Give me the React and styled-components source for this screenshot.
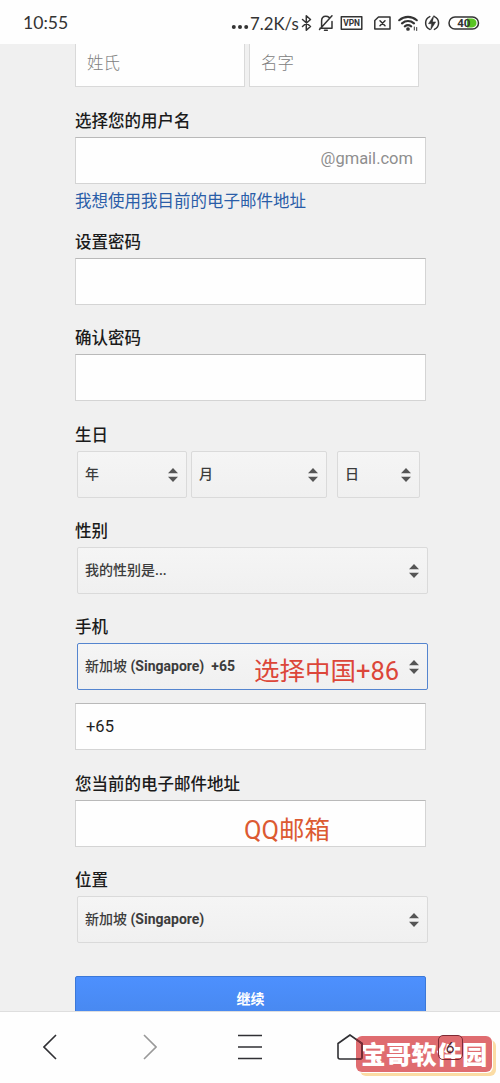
import styled, { createGlobalStyle } from "styled-components";

const GlobalStyle = createGlobalStyle`
  * {
    box-sizing: border-box;
  }
  body {
    margin: 0;
    overflow: hidden;
    font-family: Roboto, "Noto Sans CJK SC", sans-serif;
  }
`;

const Style = {
  Wrapper: styled.div`
    position: relative;
    width: 500px;
    height: 1083px;
    display: flex;
    flex-direction: column;
    overflow: hidden;
    background: #fefefe;
  `,
  StatusBar: styled.header`
    height: 44px;
    flex-shrink: 0;
    display: flex;
    justify-content: space-between;
    padding: 1px 19px 0 23px;
    align-items: center;
    color: #333;
    font-family: Lato, sans-serif;
  `,
  Time: styled.span`
    padding-top: 1px;
    font-size: 17.6px;
    line-height: 24px;
  `,
  StatusIcons: styled.div`
    display: flex;
    align-items: center;
    svg {
      display: block;
      fill: none;
      stroke: #333;
      stroke-width: 1.5;
      stroke-linecap: round;
      stroke-linejoin: round;
    }
  `,
  Speed: styled.span`
    width: 51px;
    padding-left: 1px;
    padding-top: 2px;
    font-size: 16.8px;
    line-height: 24px;
    white-space: nowrap;
  `,
  Form: styled.main`
    height: 967px;
    flex-shrink: 0;
    padding-left: 75px;
    background: #f0f0f0;
    overflow: hidden;
  `,
  NameRow: styled.div`
    display: flex;
    gap: 4px;
    height: 43px;
  `,
  NameInput: styled.div`
    width: 170px;
    padding: 8px 11px;
    font-size: 16.5px;
    line-height: 24px;
    font-weight: 300;
    color: #808080;
    background: #fefefe;
    border: 1px solid #d9d9d9;
    border-top: 0;
  `,
  Group: styled.section`
    padding-top: ${(props) => props.$gap || 20}px;
  `,
  Label: styled.div`
    height: 24px;
    margin-bottom: 5px;
    padding-top: 1px;
    font-size: 16.5px;
    line-height: 25px;
    font-weight: 500;
    color: #1b1b1b;
    white-space: nowrap;
  `,
  Input: styled.div`
    position: relative;
    width: 351px;
    height: 47px;
    margin-top: ${(props) => props.$top || 0}px;
    padding: 0 12px 0 10px;
    display: flex;
    align-items: center;
    justify-content: ${(props) => (props.$right ? "flex-end" : "flex-start")};
    font-size: 16.5px;
    color: ${(props) => (props.$right ? "#8e8e8e" : "#222")};
    background: #fefefe;
    border: 1px solid #d4d4d4;
    border-top-color: #b9b9b9;
  `,
  Suffix: styled.span`
    padding-bottom: 4px;
  `,
  Link: styled.a`
    display: block;
    height: 24px;
    margin-top: 5px;
    margin-bottom: -4px;
    font-size: 16.5px;
    line-height: 25px;
    color: #2a5da8;
  `,
  SelectRow: styled.div`
    display: flex;
  `,
  Select: styled.div`
    position: relative;
    width: ${(props) => props.$width || 351}px;
    height: 47px;
    margin-left: ${(props) => props.$left || 2}px;
    padding: 0 8px 4px 7px;
    display: flex;
    align-items: center;
    justify-content: space-between;
    font-size: 14px;
    font-weight: 500;
    color: #3c3c3c;
    white-space: pre;
    background: linear-gradient(#f5f5f5, #f0f0f0);
    border: 1px solid ${(props) => (props.$focus ? "#5585cf" : "#dadada")};
    border-radius: 2px;
  `,
  Latin: styled.span`
    font-weight: 700;
  `,
  Arrows: styled.svg`
    display: block;
    width: 10px;
    height: 16px;
    margin-top: 4px;
    fill: #555;
  `,
  Note: styled.span`
    position: absolute;
    left: ${(props) => props.$left}px;
    top: ${(props) => props.$top}px;
    font-size: 25.5px;
    line-height: 36px;
    font-weight: 400;
    color: ${(props) => props.color};
    white-space: nowrap;
  `,
  Submit: styled.div`
    width: 351px;
    height: 47px;
    margin-top: 33px;
    font-size: 14px;
    line-height: 44px;
    font-weight: 700;
    text-align: center;
    color: #fff;
    background: linear-gradient(#4d90fe, #4787ed);
    border: 1px solid #3b78d8;
    border-radius: 2px;
  `,
  NavBar: styled.nav`
    height: 72px;
    flex-shrink: 0;
    display: grid;
    grid-template-columns: repeat(5, 100px);
    place-items: center;
    padding-bottom: 1px;
    border-top: 1px solid #dedede;
    svg {
      position: relative;
      z-index: 1;
      display: block;
      fill: none;
      stroke: #303034;
      stroke-width: 1.6;
    }
  `,
  TabCount: styled.div`
    position: relative;
    z-index: 1;
    width: 25px;
    height: 25px;
    border: 1.6px solid #7e2a34;
    border-radius: 5px;
    font: 15px/23px Lato, sans-serif;
    text-align: center;
    color: #4b2229;
  `,
  Watermark: styled.div`
    position: absolute;
    left: 356px;
    top: 1036px;
    width: 136px;
    height: 36px;
    font-family: "Noto Sans CJK SC", sans-serif;
    font-size: 25.3px;
    line-height: 35px;
    font-weight: 900;
    text-align: center;
    white-space: nowrap;
    color: #fff;
    background: #df6c70;
    border-radius: 6px;
    box-shadow: 1px 1px 0 #fff, 4px 4px 0 #fbdca4;
  `,
};

const Arrows = () => (
  <Style.Arrows viewBox="0 0 10 16">
    <path d="M0 6.2 5 1l5 5.2zM0 9.8h10L5 15z" />
  </Style.Arrows>
);

const StatusIcons = () => (
  <Style.StatusIcons>
    <svg width="18" height="20">
      <g fill="#333" stroke="none">
        <circle cx="2.8" cy="14" r="2" />
        <circle cx="9" cy="14" r="2" />
        <circle cx="15.2" cy="14" r="2" />
      </g>
    </svg>
    <Style.Speed>7.2K/s</Style.Speed>
    <svg width="18" height="20">
      <path d="m2.5 6.5 8 7-4.2 3.8V2.8l4.2 3.7-8 7" />
    </svg>
    <svg width="22" height="20">
      <path d="M2 15.2h12M14 15V8.5M3.6 14V8c0-3 1.8-4.8 4.2-4.8 1.4 0 2.4.4 3.2 1.2M1.5 16.5 14 2.8M6.5 17.3h2.8" />
    </svg>
    <svg width="34" height="20">
      <rect x="1.3" y="3.8" width="20.5" height="12.5" />
      <text
        x="11.6"
        y="13"
        textAnchor="middle"
        fontFamily="Roboto"
        fontSize="8.4"
        fontWeight="700"
        fill="#333"
        stroke="none"
      >
        VPN
      </text>
    </svg>
    <svg width="24" height="20">
      <path d="M4.5 4h11.5v12H0.8V7.5zM6 7.7l5 5M11 7.7l-5 5" />
    </svg>
    <svg width="26" height="20">
      <path
        d="M1.2 7.2c5.3-4.5 12.3-4.5 17.6 0M4 10.4c3.6-3 8.4-3 12 0M6.8 13.4c2-1.5 4.4-1.5 6.4 0"
        strokeWidth="2.1"
      />
      <circle cx="10" cy="16" r="1.1" fill="#333" />
      <path d="M16.3 14v3M18.7 14.5v3" strokeWidth="1" />
    </svg>
    <svg width="24" height="20">
      <path d="M5.8 3.6a7 7 0 0 0 0 12.8M10.4 3.6a7 7 0 0 1 0 12.8" />
      <path d="M9.7 2.8 4.5 10.7h3.1l-1 6.2 5.1-8H8.6z" fill="#333" strokeWidth=".5" />
    </svg>
    <svg width="33" height="20">
      <path
        d="M19 5.5h5c6 0 6 9 0 9h-5z"
        fill="#59c522"
        stroke="none"
      />
      <rect x="1" y="4" width="29.5" height="12" rx="6" />
      <text
        x="15.8"
        y="14.1"
        textAnchor="middle"
        fontFamily="Roboto"
        fontSize="11.5"
        fontWeight="700"
        fill="#333"
        stroke="none"
      >
        40
      </text>
    </svg>
  </Style.StatusIcons>
);

const App = () => {
  return (
    <Style.Wrapper>
      <GlobalStyle />
      <Style.StatusBar>
        <Style.Time>10:55</Style.Time>
        <StatusIcons />
      </Style.StatusBar>
      <Style.Form>
        <Style.NameRow>
          <Style.NameInput>姓氏</Style.NameInput>
          <Style.NameInput>名字</Style.NameInput>
        </Style.NameRow>
        <Style.Group $gap={21}>
          <Style.Label>选择您的用户名</Style.Label>
          <Style.Input $right>
            <Style.Suffix>@gmail.com</Style.Suffix>
          </Style.Input>
          <Style.Link>我想使用我目前的电子邮件地址</Style.Link>
        </Style.Group>
        <Style.Group>
          <Style.Label>设置密码</Style.Label>
          <Style.Input />
        </Style.Group>
        <Style.Group>
          <Style.Label>确认密码</Style.Label>
          <Style.Input />
        </Style.Group>
        <Style.Group $gap={21}>
          <Style.Label>生日</Style.Label>
          <Style.SelectRow>
            <Style.Select $width={110}>
              年<Arrows />
            </Style.Select>
            <Style.Select $width={136} $left={4}>
              月<Arrows />
            </Style.Select>
            <Style.Select $width={83} $left={10}>
              日<Arrows />
            </Style.Select>
          </Style.SelectRow>
        </Style.Group>
        <Style.Group>
          <Style.Label>性别</Style.Label>
          <Style.Select>
            我的性别是...
            <Arrows />
          </Style.Select>
        </Style.Group>
        <Style.Group>
          <Style.Label>手机</Style.Label>
          <Style.Select $focus>
            <span>
              新加坡<Style.Latin> (Singapore)  +65</Style.Latin>
            </span>
            <Style.Note $left={176} $top={9} color="#dc4639">
              选择中国+86
            </Style.Note>
            <Arrows />
          </Style.Select>
          <Style.Input $top={13}>+65</Style.Input>
        </Style.Group>
        <Style.Group $gap={21}>
          <Style.Label>您当前的电子邮件地址</Style.Label>
          <Style.Input>
            <Style.Note $left={168} $top={11} color="#dc5a32">
              QQ邮箱
            </Style.Note>
          </Style.Input>
        </Style.Group>
        <Style.Group>
          <Style.Label>位置</Style.Label>
          <Style.Select>
            <span>
              新加坡<Style.Latin> (Singapore)</Style.Latin>
            </span>
            <Arrows />
          </Style.Select>
        </Style.Group>
        <Style.Submit>继续</Style.Submit>
      </Style.Form>
      <Style.NavBar>
        <svg width="14" height="26">
          <path d="M13 1 1 13l12 12" />
        </svg>
        <svg width="14" height="26">
          <path d="m1 1 12 12L1 25" stroke="#999" />
        </svg>
        <svg width="24" height="26">
          <path d="M0 1.5h24M0 13h24M0 24.5h24" />
        </svg>
        <svg width="26" height="26">
          <path d="M13 1 1 9.5V23q0 2 2 2h20q2 0 2-2V9.5z" />
          <path d="M19 5.2 25 9.5V23q0 2-2 2h-4" stroke="#7e2a34" />
        </svg>
        <Style.TabCount>6</Style.TabCount>
      </Style.NavBar>
      <Style.Watermark>宝哥软件园</Style.Watermark>
    </Style.Wrapper>
  );
};
export default App;
